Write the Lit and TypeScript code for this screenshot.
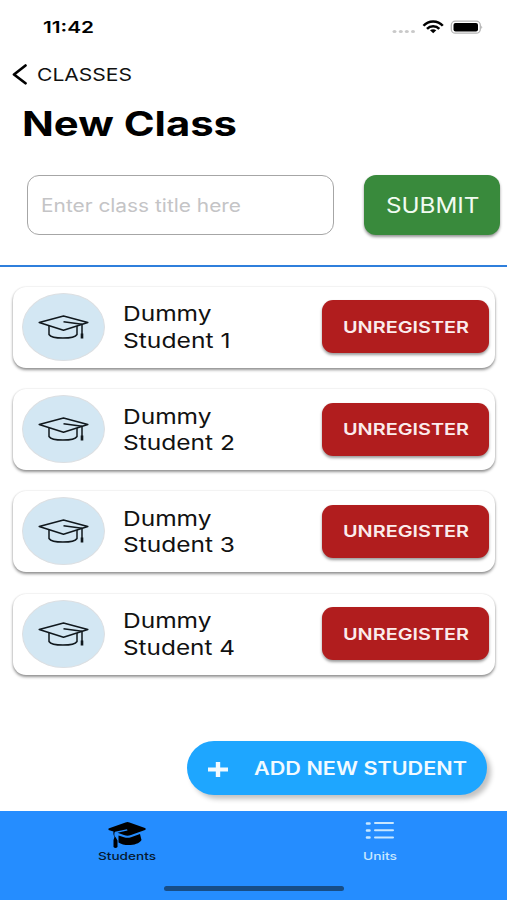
import { LitElement, html, css, svg } from "lit";
import { customElement, property, state } from "lit/decorators.js";
import { styleMap } from "lit/directives/style-map.js";

/** A single line of text stretched horizontally to a given width. */
@customElement("wide-text")
export class WideText extends LitElement {
  @property({ type: Number }) width = 100;
  @property() text = "";
  @state() private scale = 1;

  static styles = css`
    :host { display: block; flex: none; white-space: nowrap; text-align: left; }
    .box { display: block; }
    .line { display: inline-block; transform-origin: 0 50%; }
  `;

  protected firstUpdated() {
    const line = this.renderRoot.querySelector(".line") as HTMLElement;
    if (line.offsetWidth) this.scale = this.width / line.getBoundingClientRect().width;
  }

  render() {
    return html`<span class="box" style=${styleMap({ width: `${this.width}px` })}
      ><span class="line" style=${styleMap({ transform: `scaleX(${this.scale})` })}>${this.text}</span></span>`;
  }
}

@customElement("student-card")
export class StudentCard extends LitElement {
  @property({ type: Number }) number = 1;

  static styles = css`
    :host { display: block; }
    .card {
      display: flex; align-items: center; box-sizing: border-box;
      height: 81px; padding: 0 6px 1px 9px; border-radius: 13px; background: #fff;
      box-shadow: 0 2px 3px rgba(0, 0, 0, 0.42), 0 0 2px rgba(0, 0, 0, 0.12);
    }
    .avatar {
      display: flex; align-items: center; justify-content: center; box-sizing: border-box;
      width: 83px; height: 68px; border-radius: 50%;
      background: #d3e7f3; border: 1px solid #dcdfe2;
    }
    .name { flex: 1; padding: 2px 0 0 18px; font-size: 20.5px; line-height: 26.5px; color: #111; }
    .button {
      display: flex; align-items: center; justify-content: center;
      width: 167px; height: 53px; border: 0; padding: 0; border-radius: 11px;
      background: #b11d1e; color: #fbecec; font: 600 16px Inter, sans-serif;
      box-shadow: 0 2px 3px rgba(0, 0, 0, 0.4);
    }
  `;

  render() {
    return html`
      <div class="card">
        <div class="avatar">
          <svg width="52" height="26" viewBox="0 0 52 26" fill="none" stroke="#10181d" stroke-width="1.5" stroke-linejoin="round">
            <path d="M1.200 8.500 25.500 2 49.800 8.500 25.500 16.300Z" />
            <path d="M11 11.800V20.500C14 25.300 36 25.300 39 20.500V12" />
            <path d="M25.500 7.800 44 10.300V20" />
            <path d="M44 19.500v5" stroke-width="2.600" />
          </svg>
        </div>
        <div class="name">
          <wide-text text="Dummy" width="88.500"></wide-text>
          <wide-text text=${`Student ${this.number}`} width=${this.number === 1 ? 107.5 : 112}></wide-text>
        </div>
        <button class="button"><wide-text text="UNREGISTER" width="126"></wide-text></button>
      </div>
    `;
  }
}

@customElement("app-root")
export class AppRoot extends LitElement {
  private students = [1, 2, 3, 4];

  static styles = css`
    :host {
      display: flex; flex-direction: column; width: 507px; height: 900px;
      overflow: hidden; background: #fff; color: #000;
      font-family: Inter, "Liberation Sans", sans-serif;
    }
    .status {
      display: flex; align-items: center; justify-content: space-between; box-sizing: border-box;
      height: 54px; padding: 0 24px 0 43px; font-size: 15.8px; font-weight: 600;
    }
    .back { display: flex; align-items: center; gap: 9px; height: 40px; padding-left: 12px; font-size: 17.3px; color: #111; }
    .title { margin: 0; height: 60px; padding-left: 21.500px; font-size: 33.5px; line-height: 60px; font-weight: 700; }
    .form { display: flex; justify-content: space-between; height: 60px; margin: 21px 6.600px 0 27.400px; }
    .field {
      display: flex; align-items: center; box-sizing: border-box; width: 307px; padding-left: 12.500px;
      border: 1.500px solid #a6a6a6; border-radius: 12px; font-size: 18px; color: #c4c4c6;
    }
    .submit {
      display: flex; align-items: center; justify-content: center; width: 136px;
      border: 0; padding: 0; border-radius: 12px; background: #398a3c; color: #f1fbf1;
      font: 400 21px Inter, sans-serif; box-shadow: 0 2px 3px rgba(0, 0, 0, 0.42);
    }
    .rule { height: 2px; margin-top: 30px; background: #2f7fdc; }
    .list { display: flex; flex-direction: column; gap: 21.300px; margin: 19.800px 12px 0 13px; }
    .fab {
      display: flex; align-items: center; align-self: flex-end; gap: 25px; box-sizing: border-box;
      width: 300px; height: 54px; margin: auto 20.500px 16px 0; padding: 0 0 0 20px; border: 0; border-radius: 27px;
      background: #1ea6ff; color: #f2faff; font: 600 18px Inter, sans-serif;
      box-shadow: 4px 4px 5px rgba(0, 0, 0, 0.24);
    }
    .tabs {
      display: grid; grid-template-columns: 1fr 1fr; grid-template-rows: 70px 1fr; box-sizing: border-box;
      height: 89px; background: #258dff; font-size: 11px; font-weight: 500;
    }
    .tab { display: flex; flex-direction: column; align-items: center; gap: 1px; padding-top: 7px; }
    .tab svg { flex: none; }
    .on { color: #06192f; }
    .off { color: #c8e7ff; }
    .home { grid-column: 1 / 3; justify-self: center; width: 180px; height: 5px; margin-top: 5px; border-radius: 3px; background: #174d86; }
  `;

  render() {
    return html`
      <div class="status">
        <wide-text text="11:42" width="51"></wide-text>
        <svg width="92" height="20" viewBox="0 0 92 20">
          ${[3.5, 9.8, 15.8, 22].map((x) => svg`<ellipse cx=${x} cy="14.500" rx="2" ry="1.600" fill="#c9c9c9" />`)}
          <g fill="none" stroke="#000" stroke-width="2.500">
            <path d="M32.500 8.700C37.500 3 46.800 3 51.800 8.700" />
            <path d="M36 11.800C39.300 8.300 45 8.300 48.300 11.800" />
          </g>
          <path d="M39 13.300Q42.200 11 45.300 13.300L42.200 16.200Z" />
          <rect x="60.300" y="4.200" width="29" height="12" rx="4" fill="none" stroke="#b5b5b5" stroke-width="1.300" />
          <rect x="62.500" y="6" width="24.500" height="8.500" rx="2" />
          <path d="M90.500 8.500q1.500 1.700 0 3.400z" fill="#888" />
        </svg>
      </div>
      <div class="back">
        <svg width="16" height="22" viewBox="0 0 16 22" fill="none" stroke="#000" stroke-width="2.700" stroke-linecap="round" stroke-linejoin="round">
          <path d="M13.500 2.500 2 11.500 13.500 20.300" />
        </svg>
        <wide-text text="CLASSES" width="95"></wide-text>
      </div>
      <h1 class="title"><wide-text text="New Class" width="215"></wide-text></h1>
      <div class="form">
        <div class="field"><wide-text text="Enter class title here" width="200"></wide-text></div>
        <button class="submit"><wide-text text="SUBMIT" width="93.500"></wide-text></button>
      </div>
      <div class="rule"></div>
      <div class="list">
        ${this.students.map((n) => html`<student-card .number=${n}></student-card>`)}
      </div>
      <button class="fab">
        <svg width="22" height="18" viewBox="0 0 22 18" fill="currentColor">
          <rect x="1" y="8.500" width="20" height="4" />
          <rect x="8.800" y="3" width="4.400" height="15" />
        </svg>
        <wide-text text="ADD NEW STUDENT" width="213"></wide-text>
      </button>
      <nav class="tabs">
        <div class="tab on">
          <svg width="40" height="30" viewBox="0 0 40 30" fill="#000">
            <path d="M1.500 10.500 18.500 4.500Q20.500 3.600 22.500 4.500L38 10Q39.500 11 38 12L24 17Q20.500 18.300 17 17L10.500 14.800 20.500 12.500 20 11.200 8 13.800Q7 15 7.500 18L8.800 19.500 10.500 22.500V29Q8.500 31 6.500 29V22L7.500 19Q6 17 6.500 13.500L1.500 12Z" />
            <path d="M11.500 17.500 17 19.200Q20.500 20.500 24 19.200L33 16 34.500 22C31 28 17 28.500 11.500 24.500Z" />
          </svg>
          <wide-text text="Students" width="58"></wide-text>
        </div>
        <div class="tab off">
          <svg width="30" height="30" viewBox="0 0 30 30" fill="none" stroke="currentColor" stroke-width="2" stroke-linecap="round">
            <path d="M2 5.500h2.500M2 12.500h2.500M2 19.500h2.500" stroke-width="2.600" />
            <path d="M10 5h18M10 12.200h18M10 19.500h18" />
          </svg>
          <wide-text text="Units" width="34"></wide-text>
        </div>
        <div class="home"></div>
      </nav>
    `;
  }
}
